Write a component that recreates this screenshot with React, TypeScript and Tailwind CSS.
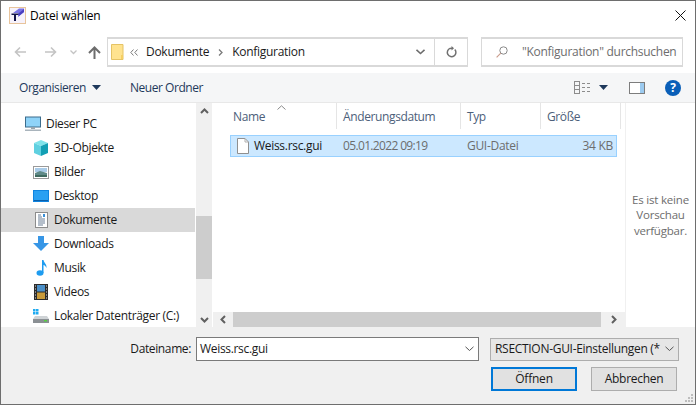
import { ReactNode } from "react";

const font = { fontFamily: '"Open Sans", "Noto Sans", sans-serif' };

const Chevron = ({ dir, color = "#606060" }: { dir: "up" | "down" | "left" | "right"; color?: string }) => {
  const d = {
    up: "M1 6 L4.5 2.5 L8 6",
    down: "M1 3 L4.5 6.5 L8 3",
    left: "M6 1 L2.5 4.5 L6 8",
    right: "M3 1 L6.5 4.5 L3 8",
  }[dir];
  return (
    <svg width="9" height="9" viewBox="0 0 9 9" fill="none">
      <path d={d} stroke={color} strokeWidth="2" />
    </svg>
  );
};

const Caret = () => (
  <svg width="9" height="5" viewBox="0 0 9 5">
    <path d="M0 0 H9 L4.5 5 Z" fill="#1e395b" />
  </svg>
);

const AppIcon = () => (
  <svg width="17" height="17" viewBox="0 0 17 17">
    <rect x="0.5" y="0.5" width="16" height="16" fill="#f6f2fb" stroke="#e8c49c" />
    <path d="M4 6 L10 1.5 H15 L15 5 L9 10 L9 6 Z" fill="#7a74e6" />
    <path d="M10 6 L15 2 V5 L10 9 Z" fill="#4a3fc0" />
    <path d="M2.5 6.5 H9.5 V8 H7 V14 H5 V8 H2.5 Z" fill="#14144a" />
  </svg>
);

const PcIcon = () => (
  <svg width="16" height="16" viewBox="0 0 16 16">
    <rect x="0.5" y="1" width="15" height="10" fill="#8fd3f8" stroke="#3c6c8c" />
    <rect x="6" y="11" width="4" height="2" fill="#9aa5ad" />
    <rect x="0" y="13.5" width="16" height="1.5" fill="#a9b4bc" />
  </svg>
);

const CubeIcon = () => (
  <svg width="16" height="16" viewBox="0 0 16 16">
    <path d="M8 0 L15 3 L8 6 L1 3 Z" fill="#7fe3ea" />
    <path d="M1 3 L8 6 V16 L1 13 Z" fill="#5fd0e0" />
    <path d="M8 6 L15 3 V13 L8 16 Z" fill="#129fb4" />
  </svg>
);

const PictureIcon = () => (
  <svg width="16" height="13" viewBox="0 0 16 13">
    <rect x="0.5" y="0.5" width="15" height="12" fill="#fff" stroke="#9a9a9a" />
    <rect x="2" y="2" width="12" height="4" fill="#a9cbe8" />
    <path d="M2 7 L7 5 L14 7 V11 H2 Z" fill="#5f8a88" />
    <rect x="2" y="9" width="12" height="2" fill="#3f6a5f" />
  </svg>
);

const DesktopIcon = () => (
  <svg width="16" height="12" viewBox="0 0 16 12">
    <rect x="0" y="0" width="16" height="12" fill="#0f84e0" />
    <rect x="1" y="1" width="14" height="9" fill="#2aa0f2" />
    <rect x="1" y="10" width="14" height="1" fill="#0b5ea8" />
  </svg>
);

const DocIcon = () => (
  <svg width="13" height="16" viewBox="0 0 13 16">
    <rect x="0.5" y="0.5" width="12" height="15" fill="#fff" stroke="#8c8c8c" />
    <path d="M3 3 H6 M3 5 H7 M3 7 H10 M3 9 H10 M3 11 H10 M3 13 H8" stroke="#6a7f96" strokeWidth="1" />
    <path d="M8 2 L10 2 L10 5 L8 5 Z" fill="#3a8fd8" />
  </svg>
);

const DownloadIcon = () => (
  <svg width="16" height="16" viewBox="0 0 16 16">
    <path d="M5 0 H11 V7 H16 L8 15 L0 7 H5 Z" fill="#3796e6" />
  </svg>
);

const MusicIcon = () => (
  <svg width="11" height="16" viewBox="0 0 11 16">
    <ellipse cx="4" cy="13" rx="3.5" ry="2.8" fill="#1e9cf0" />
    <path d="M6 0 H7.5 C8 3 11 4 10.5 8 C9.5 6 8.5 5 7.5 5 V13 H6 Z" fill="#1e9cf0" />
  </svg>
);

const VideoIcon = () => (
  <svg width="14" height="16" viewBox="0 0 14 16">
    <rect width="14" height="16" fill="#2b2b2b" />
    <rect x="3" y="1" width="8" height="6.5" fill="#4a8fc8" />
    <rect x="3" y="8.5" width="8" height="6.5" fill="#c89a3a" />
    <path d="M1 2 H2 M1 5 H2 M1 8 H2 M1 11 H2 M1 14 H2 M12 2 H13 M12 5 H13 M12 8 H13 M12 11 H13 M12 14 H13" stroke="#ddd" />
  </svg>
);

const DriveIcon = () => (
  <svg width="16" height="14" viewBox="0 0 16 14">
    <path d="M0 0 H2.5 V2.5 H0 Z M3 0 H5.5 V2.5 H3 Z M0 3 H2.5 V5.5 H0 Z M3 3 H5.5 V5.5 H3 Z" fill="#1eaaf0" />
    <path d="M2 7 H14 L16 10 H0 Z" fill="#cfd3d6" />
    <rect x="0" y="10" width="16" height="4" fill="#8b9094" />
    <rect x="11" y="11" width="3" height="1.5" fill="#55d040" />
  </svg>
);

const FileIcon = () => (
  <svg width="12" height="16" viewBox="0 0 12 16" fill="none">
    <path d="M0.5 0.5 H8 L11.5 4 V15.5 H0.5 Z" fill="#fff" stroke="#8f8f8f" />
    <path d="M8 0.5 V4 H11.5" stroke="#b0b0b0" />
  </svg>
);

const TreeRow = ({ icon, label, active, top }: { icon: ReactNode; label: string; active?: boolean; top?: boolean }) => (
  <div className={`flex h-6 items-center ${active ? "bg-[#d9d9d9]" : ""}`}>
    <div className={`flex justify-center ${top ? "ml-6 w-4" : "ml-8 w-4"}`}>{icon}</div>
    <span className="ml-[5px] whitespace-nowrap text-[12px] tracking-[-0.33px] text-[#1a1a1a]">{label}</span>
  </div>
);

const HeaderCell = ({ label, width }: { label: string; width: string }) => (
  <div className={`flex h-[26px] items-center border-r border-[#e5e5e5] pt-[1px] text-[12px] tracking-[-0.38px] text-[#4c607a] ${width}`}>
    {label}
  </div>
);

export default function App() {
  return (
    <div style={font} className="flex h-[405px] w-[696px] flex-col overflow-hidden border border-[#6e6e6e] bg-white">
      {/* title bar */}
      <div className="flex h-[29px] shrink-0 items-center pl-2 pr-[9px]">
        <AppIcon />
        <span className="ml-1 text-[12px] tracking-[-0.22px] text-black">Datei wählen</span>
        <svg className="ml-auto" width="11" height="11" viewBox="0 0 11 11">
          <path d="M0.5 0.5 L10.5 10.5 M10.5 0.5 L0.5 10.5" stroke="#111" strokeWidth="1" />
        </svg>
      </div>

      {/* nav row */}
      <div className="flex h-[43px] shrink-0 items-start pt-[7px]">
        <div className="flex h-[30px] w-[106px] shrink-0 items-center pl-[13px]">
          <svg width="13" height="12" viewBox="0 0 13 12" fill="none">
            <path d="M12 6 H1.5 M6 1.5 L1.5 6 L6 10.5" stroke="#c4c4c4" strokeWidth="1.6" />
          </svg>
          <svg className="ml-[17px]" width="13" height="12" viewBox="0 0 13 12" fill="none">
            <path d="M1 6 H11.5 M7 1.5 L11.5 6 L7 10.5" stroke="#c4c4c4" strokeWidth="1.6" />
          </svg>
          <svg className="ml-[13px]" width="7" height="5" viewBox="0 0 7 5" fill="none">
            <path d="M0.5 0.5 L3.5 3.5 L6.5 0.5" stroke="#c4c4c4" strokeWidth="1.3" />
          </svg>
          <svg className="ml-[11px]" width="13" height="13" viewBox="0 0 13 13" fill="none">
            <path d="M6.5 13 V2 M1 7 L6.5 1.5 L12 7" stroke="#6d6d6d" strokeWidth="2" />
          </svg>
        </div>
        <div className="flex h-[30px] w-[361px] shrink-0 items-center border-2 border-x-[1.5px] border-[#d9d9d9] pl-[3px] text-[12px] text-[#1a1a1a]">
          <svg width="13" height="16" viewBox="0 0 13 16">
            <path d="M0.5 0.5 H12 V15.5 H0.5 Z" fill="#ffe38f" stroke="#e5c365" />
            <path d="M10 11 H12 V15 H10 Z" fill="#f5cf63" />
          </svg>
          <svg className="ml-[6px]" width="8" height="7" viewBox="0 0 8 7" fill="none">
            <path d="M3.5 0.5 L0.8 3.5 L3.5 6.5 M7.5 0.5 L4.8 3.5 L7.5 6.5" stroke="#7a7a7a" />
          </svg>
          <span className="ml-2 tracking-[-0.28px]">Dokumente</span>
          <svg className="ml-[9px]" width="5" height="7" viewBox="0 0 5 7" fill="none">
            <path d="M1 0.5 L4 3.5 L1 6.5" stroke="#7a7a7a" strokeWidth="1.3" />
          </svg>
          <span className="ml-[9px] tracking-[-0.3px]">Konfiguration</span>
          <div className="ml-auto mr-[9px]">
            <svg width="9" height="6" viewBox="0 0 9 6" fill="none">
              <path d="M0.5 0.8 L4.5 4.5 L8.5 0.8" stroke="#6d6d6d" strokeWidth="1.6" />
            </svg>
          </div>
          <div className="flex h-full w-[33px] items-center justify-center border-l border-[#d9d9d9]">
            <svg width="11" height="12" viewBox="0 0 11 12" fill="none">
              <path d="M8.8 3.5 A4.3 4.3 0 1 1 4 2.4 L6 2.2" stroke="#707070" strokeWidth="1.5" />
              <path d="M5.5 0 L8 2.2 L5.5 4.4 Z" fill="#707070" />
            </svg>
          </div>
        </div>
        <div className="ml-[13px] flex h-[30px] w-[202px] shrink-0 items-center border-2 border-x-[1.5px] border-[#d9d9d9] pl-[14px] text-[12px] text-[#6d6d6d]">
          <svg width="12" height="12" viewBox="0 0 12 12" fill="none">
            <circle cx="7.5" cy="4.5" r="3.7" stroke="#8a8a8a" />
            <path d="M4.8 7.2 L0.6 11.4" stroke="#c99a8a" strokeWidth="1.1" />
          </svg>
          <span className="ml-[14px] whitespace-nowrap tracking-[-0.28px]">"Konfiguration" durchsuchen</span>
        </div>
      </div>

      {/* toolbar */}
      <div className="flex h-[30px] shrink-0 items-center border-b border-[#e8e8e8] bg-[#f5f6f7] pl-[18px] text-[12px] tracking-[-0.45px] text-[#1e395b]">
        <span>Organisieren</span>
        <div className="ml-[6px]"><Caret /></div>
        <span className="ml-[29px]">Neuer Ordner</span>
        <svg className="ml-[371px]" width="16" height="13" viewBox="0 0 16 13" fill="none">
          <rect x="0.5" y="0.5" width="5" height="12" stroke="#8c8c8c" />
          <path d="M0.5 4.5 H5.5 M0.5 8.5 H5.5" stroke="#8c8c8c" />
          <path d="M8 2.5 H11 M13 2.5 H16 M8 6.5 H11 M13 6.5 H16 M8 10.5 H11 M13 10.5 H16" stroke="#8c8c8c" />
        </svg>
        <div className="ml-[9px]"><Caret /></div>
        <svg className="ml-[21px]" width="16" height="12" viewBox="0 0 16 12" fill="none">
          <rect x="0.5" y="0.5" width="15" height="11" fill="#fff" stroke="#7d7d7d" />
          <rect x="11" y="1" width="4" height="10" fill="#9ccbf0" />
        </svg>
        <div className="ml-[20px] flex h-4 w-4 items-center justify-center rounded-full bg-[#0a5fb8] text-[12px] font-bold leading-none text-white">?</div>
      </div>

      {/* main area */}
      <div className="flex h-[224px] shrink-0">
        <div className="w-[194px] shrink-0 overflow-hidden pt-[9px]">
          <TreeRow top icon={<PcIcon />} label="Dieser PC" />
          <TreeRow icon={<CubeIcon />} label="3D-Objekte" />
          <TreeRow icon={<PictureIcon />} label="Bilder" />
          <TreeRow icon={<DesktopIcon />} label="Desktop" />
          <TreeRow active icon={<DocIcon />} label="Dokumente" />
          <TreeRow icon={<DownloadIcon />} label="Downloads" />
          <TreeRow icon={<MusicIcon />} label="Musik" />
          <TreeRow icon={<VideoIcon />} label="Videos" />
          <TreeRow icon={<DriveIcon />} label="Lokaler Datenträger (C:)" />
        </div>
        <div className="ml-px flex w-4 shrink-0 flex-col bg-[#f0f0f0]">
          <div className="flex h-[16px] items-center justify-center"><Chevron dir="up" /></div>
          <div className="h-[97px]" />
          <div className="h-[63px] bg-[#cdcdcd]" />
          <div className="flex-1" />
          <div className="flex h-[16px] items-center justify-center"><Chevron dir="down" /></div>
        </div>

        <div className="ml-px flex w-[412px] shrink-0 flex-col">
          <div className="relative flex pl-[17px]">
            <svg className="absolute left-[64px] top-[2px]" width="9" height="5" viewBox="0 0 9 5" fill="none">
              <path d="M0.5 4.5 L4.5 0.8 L8.5 4.5" stroke="#8a8a8a" />
            </svg>
            <HeaderCell label="Name" width="w-[107px] pl-[3px]" />
            <HeaderCell label="Änderungsdatum" width="w-[124px] pl-[6px]" />
            <HeaderCell label="Typ" width="w-[80px] pl-[6px]" />
            <HeaderCell label="Größe" width="w-[80px] pl-[6px]" />
          </div>
          <div className="ml-[17px] mt-[6px] flex h-[22px] w-[387px] items-center border border-[#99d1ff] bg-[#cce8ff] text-[12px] tracking-[-0.3px]">
            <div className="ml-[6px]"><FileIcon /></div>
            <span className="ml-[5px] w-[89px] text-[#1a1a1a]">Weiss.rsc.gui</span>
            <span className="w-[124px] tracking-[-0.65px] text-[#6d6d6d]">05.01.2022 09:19</span>
            <span className="text-[#6d6d6d]">GUI-Datei</span>
            <span className="ml-auto mr-[3px] text-[#6d6d6d]">34 KB</span>
          </div>
          <div className="mt-auto flex h-[15px] items-center bg-[#f0f0f0]">
            <div className="flex w-[20px] items-center justify-center"><Chevron dir="left" /></div>
            <div className="h-full w-[368px] bg-[#cdcdcd]" />
            <div className="flex flex-1 items-center justify-center"><Chevron dir="right" /></div>
          </div>
        </div>

        <div className="flex flex-1 items-center justify-center border-l border-[#f0f0f0] text-center text-[11.5px] leading-[15.5px] tracking-[-0.2px] text-[#6d6d6d]">
          <p>Es ist keine<br />Vorschau<br />verfügbar.</p>
        </div>
      </div>

      {/* bottom bar */}
      <div className="relative flex-1 bg-[#f0f0f0] pt-[10px]">
        <div className="flex items-center">
          <span className="w-[190px] text-right text-[12px] tracking-[-0.38px] text-[#1a1a1a]">Dateiname:</span>
          <div className="ml-[5px] flex h-6 w-[283px] items-center border border-[#7a7a7a] bg-white pl-[3px] text-[12px] tracking-[-0.32px] text-[#1a1a1a]">
            <span>Weiss.rsc.gui</span>
            <svg className="ml-auto mr-[4px]" width="9" height="6" viewBox="0 0 9 6" fill="none">
              <path d="M0.5 0.8 L4.5 4.5 L8.5 0.8" stroke="#555" />
            </svg>
          </div>
          <div className="ml-[11px] flex h-[23px] w-[189px] items-center justify-between border border-[#adadad] bg-[#e6e6e6] pl-[4px] pr-[4px] text-[12px] tracking-[-0.3px] text-[#1a1a1a]">
            <span className="whitespace-nowrap">RSECTION-GUI-Einstellungen (*</span>
            <svg width="9" height="6" viewBox="0 0 9 6" fill="none">
              <path d="M0.5 0.8 L4.5 4.5 L8.5 0.8" stroke="#555" />
            </svg>
          </div>
        </div>
        <div className="mt-[6px] flex pl-[490px]">
          <button className="flex h-6 w-[86px] items-center justify-center border-2 border-[#0078d7] bg-[#e1e1e1] text-[12px] tracking-[-0.2px] text-[#1a1a1a]">Öffnen</button>
          <button className="ml-[14px] flex h-6 w-[86px] items-center justify-center border border-[#adadad] bg-[#e1e1e1] text-[12px] tracking-[-0.3px] text-[#1a1a1a]">Abbrechen</button>
        </div>
        <svg className="absolute bottom-[1px] right-[1px]" width="10" height="10" viewBox="0 0 10 10">
          <path d="M7 1 H9 V3 H7 Z M4 4 H6 V6 H4 Z M7 4 H9 V6 H7 Z M1 7 H3 V9 H1 Z M4 7 H6 V9 H4 Z M7 7 H9 V9 H7 Z" fill="#bdbdbd" />
        </svg>
      </div>
    </div>
  );
}
